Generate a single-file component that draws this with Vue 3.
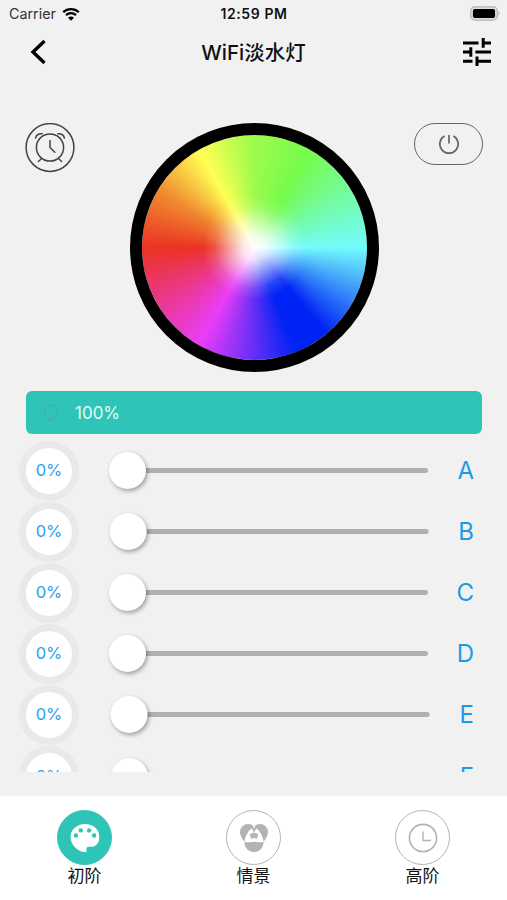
<script setup>
const channels = [
  { name: 'A', shift: 0 },
  { name: 'B', shift: 0.7 },
  { name: 'C', shift: 0 },
  { name: 'D', shift: 0 },
  { name: 'E', shift: 1.6 },
  { name: 'F', shift: 2 }
]
</script>

<template>
  <div class="screen">
    <div class="status">
      <div class="side">
        <span class="carrier">Carrier</span>
        <svg class="wifi" width="18" height="14" viewBox="0 0 18 14">
          <path d="M1.2 5.2 A11.4 11.4 0 0 1 16.8 5.2" />
          <path d="M4 8.2 A7.3 7.3 0 0 1 14 8.2" />
          <path class="dot" d="M9 13.8 L6 10.8 A4.4 4.4 0 0 1 12 10.8 Z" />
        </svg>
      </div>
      <div class="time">12:59 PM</div>
      <div class="side end">
        <svg width="31" height="15" viewBox="0 0 31 15">
          <rect x="0.7" y="0.9" width="26.6" height="13.2" rx="4" fill="#e0e0e0" stroke="#b4b4b4" stroke-width="1.2" />
          <rect x="2.9" y="3" width="22.2" height="9" rx="2" fill="#000" />
          <path d="M28.6 5 Q30.6 7.5 28.6 10 Z" fill="#a6a6a6" />
        </svg>
      </div>
    </div>

    <div class="nav">
      <svg width="18" height="26" viewBox="0 0 18 26">
        <path d="M14.5 2 L3 13 L14.5 24" fill="none" stroke="#000" stroke-width="3.4" />
      </svg>
      <h1>WiFi淡水灯</h1>
      <svg width="28" height="28" viewBox="0 0 28 28">
        <path d="M0 4.9H15.5M20.2 4.9H28M20.2 0V9.7M0 14H7.8M7.8 9.2V18.8M12.4 14H28M0 23.2H9.5M14 23.2H28M14 18.5V28" fill="none" stroke="#000" stroke-width="3" />
      </svg>
    </div>

    <div class="picker">
      <svg class="alarm" width="50" height="50" viewBox="0 0 50 50">
        <g fill="none" stroke="#444" stroke-width="1.5">
          <circle cx="25" cy="24.5" r="23.9" />
          <circle cx="25" cy="24.5" r="13.6" />
          <path d="M25 17.5V24.5L29.8 29.3M16.6 35.5L13.4 38.5M33.4 35.5L36.6 38.5M10.6 15.1Q11.5 10.3 17.2 10.7M39.4 15.1Q38.5 10.3 32.8 10.7" stroke-linecap="round" />
        </g>
      </svg>
      <div class="wheel"></div>
      <div class="power">
        <svg width="22" height="22" viewBox="0 0 22 22">
          <path d="M6.6 2.9A9.2 9.2 0 1 0 15.4 2.9M11 2V10.5" fill="none" stroke="#666" stroke-width="1.7" />
        </svg>
      </div>
    </div>

    <div class="brightness">
      <svg width="18" height="18" viewBox="0 0 18 18">
        <path d="M3.3 3.2Q9 -0.6 14.7 3.2M2.6 4.4V9A6.5 6.5 0 0 0 15.4 9V4.4M5.5 15.5Q9 18 12.5 15.5" fill="none" stroke="#43aeb4" stroke-width="1.4" />
      </svg>
      <span>100%</span>
    </div>

    <div class="list">
      <div v-for="c in channels" :key="c.name" class="row">
        <div class="badge">0%</div>
        <div class="slider" :style="{ transform: `translateX(${c.shift}px)` }">
          <div class="thumb"></div>
          <div class="track"></div>
        </div>
        <div class="letter">{{ c.name }}</div>
      </div>
    </div>

    <div class="tabs">
      <div class="tab">
        <div class="disc active">
          <svg width="30" height="30" viewBox="0 0 30 30">
            <path d="M15 1C7 1 .6 6.5 .6 14C.6 22 8 29 15 29H16.5V25.5Q16.5 23.8 18.2 23.8H22C27 23.3 29.3 19 29.3 14C29.3 6 23 1 15 1Z" fill="#fff" />
            <g fill="#2ec5b8">
              <circle cx="5.9" cy="12.5" r="2.2" />
              <circle cx="10.8" cy="7.4" r="2.2" />
              <circle cx="19.1" cy="7.4" r="2.2" />
              <circle cx="24.1" cy="12.5" r="2.2" />
            </g>
          </svg>
        </div>
        <span>初阶</span>
      </div>
      <div class="tab">
        <div class="disc">
          <svg width="30" height="30" viewBox="0 0 30 30">
            <g fill="#b3b3b3">
              <circle cx="9" cy="9" r="8" />
              <circle cx="21" cy="9" r="8" />
              <path d="M1.3 7Q1 14.5 5.6 18.6L12 12ZM28.7 7Q29 14.5 24.4 18.6L18 12Z" />
              <path d="M5.4 18.8H24.6C24.6 25 20.5 29 15 29S5.4 25 5.4 18.8Z" />
            </g>
            <path d="M15 2L13.6 5L10.4 11L15 9.8L19.6 11L16.4 5Z" fill="#b3b3b3" />
            <path d="M15 1L16 3.4L15 5.8L14 3.4Z" fill="#fff" />
            <path d="M12.6 5.2L15 9.6L10.6 11.3Q11.4 16 14.6 18.4Q9.5 20 5.4 18.8Q6.4 10.5 12.6 5.2Z" fill="#fff" />
            <path d="M17.4 5.2L15 9.6L19.4 11.3Q18.6 16 15.4 18.4Q20.5 20 24.6 18.8Q23.6 10.5 17.4 5.2Z" fill="#fff" />
          </svg>
        </div>
        <span>情景</span>
      </div>
      <div class="tab">
        <div class="disc">
          <svg width="30" height="30" viewBox="0 0 30 30">
            <path d="M15 8.5V17.5H23" fill="none" stroke="#b3b3b3" stroke-width="1.4" />
            <circle cx="15" cy="15" r="13.6" fill="none" stroke="#b3b3b3" stroke-width="1.6" />
          </svg>
        </div>
        <span>高阶</span>
      </div>
    </div>
  </div>
</template>

<style>
body {
  margin: 0;
  background: #f1f1f1;
}
</style>

<style scoped>
.screen {
  width: 507px;
  height: 900px;
  box-sizing: border-box;
  overflow: hidden;
  display: flex;
  flex-direction: column;
  background: #f1f1f1;
  font-family: Inter, "Noto Sans CJK SC", sans-serif;
  color: #111;
}
svg {
  display: block;
  flex: none;
}
.status {
  height: 27px;
  flex: none;
  display: flex;
  align-items: center;
  padding: 0 6px 0 9px;
}
.side {
  flex: 1;
  display: flex;
  align-items: center;
  gap: 6px;
}
.end {
  justify-content: flex-end;
}
.carrier {
  font-size: 14.3px;
  color: #333;
  line-height: 27px;
}
.wifi path {
  fill: none;
  stroke: #000;
  stroke-width: 2.3;
}
.wifi .dot {
  fill: #000;
  stroke: none;
}
.time {
  font-size: 14px;
  font-weight: 600;
  letter-spacing: 0.6px;
  margin-right: 2px;
}
.nav {
  height: 50px;
  flex: none;
  display: flex;
  align-items: center;
  justify-content: space-between;
  padding: 0 16px 0 30px;
}
.nav h1 {
  margin: 2px 4px 0 0;
  font-size: 20.5px;
  line-height: 30px;
  font-weight: 500;
}
.picker {
  height: 249px;
  flex: none;
  margin-top: 46px;
  padding: 0 24px 0 25px;
  display: flex;
  justify-content: space-between;
}
.wheel {
  width: 249px;
  height: 249px;
  box-sizing: border-box;
  margin-left: 19px;
  border: 12px solid #000;
  border-radius: 50%;
  background:
    radial-gradient(circle, #fff 0, rgba(255, 255, 255, 0.85) 12px, rgba(255, 255, 255, 0.45) 28px, rgba(255, 255, 255, 0.15) 40px, rgba(255, 255, 255, 0) 52px),
    conic-gradient(from 270deg, #eb3323 0deg, #f0882f 30deg, #ffff54 60deg, #9cfb4c 90deg, #75fb4c 120deg, #73fbfd 180deg, #0023f5 230deg, #0023f5 248deg, #ea3df7 300deg, #eb3323 360deg);
  background-origin: padding-box;
  background-clip: padding-box;
}
.power {
  width: 69px;
  height: 42px;
  box-sizing: border-box;
  border: 1.6px solid #666;
  border-radius: 21px;
  display: flex;
  align-items: center;
  justify-content: center;
}
.brightness {
  height: 43px;
  flex: none;
  margin: 19px 25px 0 26px;
  border-radius: 6px;
  background: #2ec5b8;
  display: flex;
  align-items: center;
  gap: 15px;
  padding-left: 16px;
  box-sizing: border-box;
  color: #e3faf7;
  font-size: 17px;
}
.list {
  height: 332px;
  flex: none;
  margin-top: 6px;
  overflow: hidden;
}
.row {
  height: 61.1px;
  display: flex;
  align-items: center;
  padding: 0 33px 0 19px;
}
.badge {
  width: 60px;
  height: 60px;
  box-sizing: border-box;
  flex: none;
  border: 7px solid #e9e9e9;
  border-radius: 50%;
  background: #fff;
  color: #2ba0e8;
  font-size: 16.5px;
  line-height: 18px;
  padding-bottom: 1px;
  display: flex;
  align-items: center;
  justify-content: center;
}
.slider {
  width: 319px;
  margin-left: 30px;
  display: flex;
  align-items: center;
}
.thumb {
  width: 37px;
  height: 37px;
  flex: none;
  border-radius: 50%;
  background: #fff;
  box-shadow: 1.5px 2px 4px rgba(0, 0, 0, 0.35);
  z-index: 1;
}
.track {
  height: 5px;
  flex: 1;
  margin-left: -2px;
  border-radius: 0 2.5px 2.5px 0;
  background: #b0b0b0;
}
.letter {
  flex: 1;
  text-align: right;
  font-size: 24px;
  color: #1c9ae6;
}
.tabs {
  height: 104px;
  flex: none;
  margin-top: auto;
  background: #fff;
  display: grid;
  grid-template-columns: repeat(3, 1fr);
}
.tab {
  display: flex;
  flex-direction: column;
  align-items: center;
  padding-top: 14px;
  font-size: 17px;
  line-height: 22px;
}
.disc {
  width: 55px;
  height: 55px;
  box-sizing: border-box;
  flex: none;
  border: 1px solid #b3b3b3;
  border-radius: 50%;
  display: flex;
  align-items: center;
  justify-content: center;
}
.active {
  border-color: #2ec5b8;
  background: #2ec5b8;
}
</style>
